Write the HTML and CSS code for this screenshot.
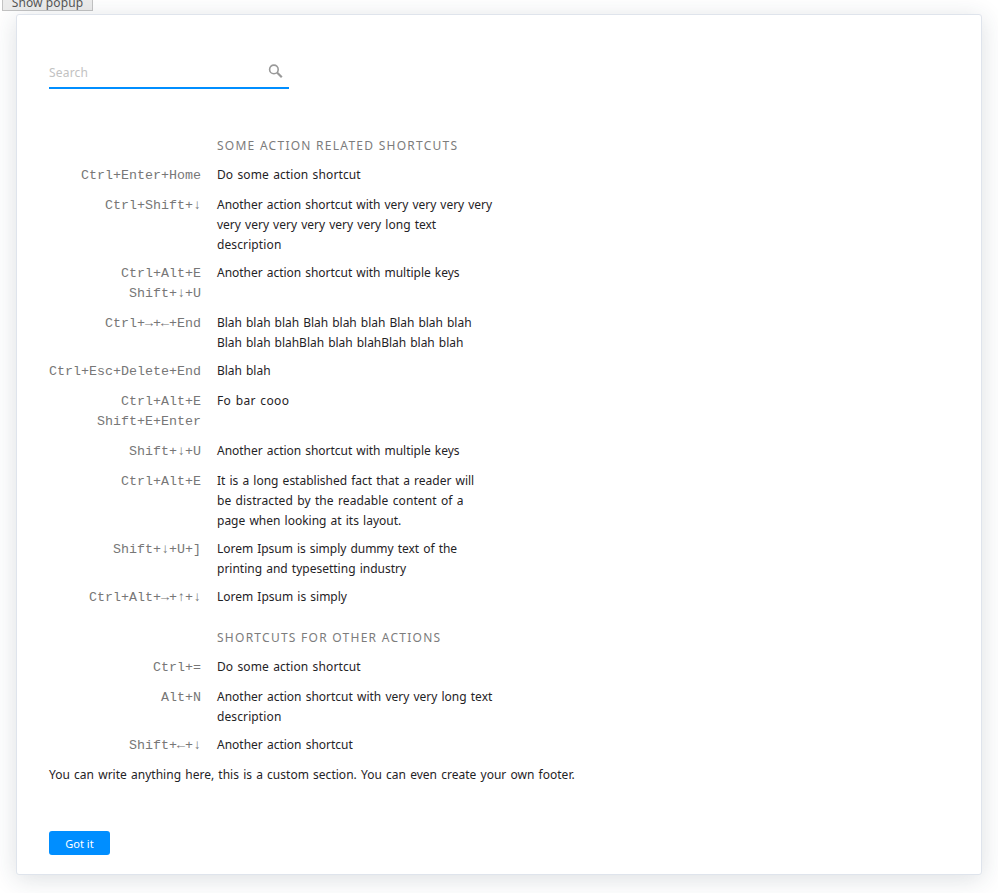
FILE: index.html
```html
<!DOCTYPE html>
<html lang="en">
<head>
<meta charset="utf-8">
<title>Keyboard shortcuts</title>
<link rel="stylesheet" href="styles.css">
</head>
<body>
<button class="show-popup" type="button">Show popup</button>
<main class="popup">
  <div class="search">
    <span class="search-label">Search</span>
    <svg class="search-icon" width="16" height="16" viewBox="0 0 16 16" fill="none" stroke="#999"><circle cx="5.9" cy="5.4" r="4.3" stroke-width="1.6"/><path d="M9 8.5 13.8 13.2" stroke-width="2.2"/></svg>
  </div>
  <section class="group">
    <h2 class="title"><span>SOME ACTION RELATED SHORTCUTS</span></h2>
    <div class="row"><div class="keys">Ctrl+Enter+Home</div><div class="desc"><span class="loose">Do some action shortcut</span></div></div>
    <div class="row"><div class="keys">Ctrl+Shift+↓</div><div class="desc"><span class="tight">Another action shortcut with very very very very</span><br><span>very very very very very very long text</span><br><span class="loose">description</span></div></div>
    <div class="row"><div class="keys">Ctrl+Alt+E<br>Shift+↓+U</div><div class="desc"><span class="tight">Another action shortcut with multiple keys</span></div></div>
    <div class="row"><div class="keys">Ctrl+→+←+End</div><div class="desc"><span class="tight">Blah blah blah Blah blah blah Blah blah blah</span><br><span class="tight">Blah blah blahBlah blah blahBlah blah blah</span></div></div>
    <div class="row"><div class="keys">Ctrl+Esc+Delete+End</div><div class="desc"><span class="tight">Blah blah</span></div></div>
    <div class="row"><div class="keys">Ctrl+Alt+E<br>Shift+E+Enter</div><div class="desc"><span class="wide">Fo bar cooo</span></div></div>
    <div class="row"><div class="keys">Shift+↓+U</div><div class="desc"><span class="tight">Another action shortcut with multiple keys</span></div></div>
    <div class="row"><div class="keys">Ctrl+Alt+E</div><div class="desc"><span>It is a long established fact that a reader will</span><br><span class="loose">be distracted by the readable content of a</span><br><span>page when looking at its layout.</span></div></div>
    <div class="row"><div class="keys">Shift+↓+U+]</div><div class="desc"><span class="tight">Lorem Ipsum is simply dummy text of the</span><br><span>printing and typesetting industry</span></div></div>
    <div class="row"><div class="keys">Ctrl+Alt+→+↑+↓</div><div class="desc"><span>Lorem Ipsum is simply</span></div></div>
  </section>
  <section class="group">
    <h2 class="title"><span>SHORTCUTS FOR OTHER ACTIONS</span></h2>
    <div class="row"><div class="keys">Ctrl+=</div><div class="desc"><span class="loose">Do some action shortcut</span></div></div>
    <div class="row"><div class="keys">Alt+N</div><div class="desc"><span>Another action shortcut with very very long text</span><br><span class="loose">description</span></div></div>
    <div class="row"><div class="keys">Shift+←+↓</div><div class="desc"><span>Another action shortcut</span></div></div>
  </section>
  <p class="note"><span>You can write anything here, this is a custom section. You can even create your own footer.</span></p>
  <button class="confirm" type="button">Got it</button>
</main>
</body>
</html>
```
FILE: styles.css
```css
* { box-sizing: border-box; }
html, body { height: 893px; overflow: hidden; }
body {
  margin: 0;
  background: #fff;
  color: #1f2326;
  font: 12px/20px "Noto Sans", "Open Sans", sans-serif;
}
button { font-family: inherit; }
.show-popup {
  display: block;
  width: 91px;
  height: 22px;
  margin: -11px 0 0 2px;
  padding: 4px 0 0;
  border: 1px solid #c3c3c3;
  background: #ececec;
  color: #555;
  font-size: 12px;
  line-height: 18px;
  letter-spacing: 0.1px;
}
.popup {
  width: 966px;
  height: 861px;
  margin: 3px 0 0 16px;
  padding: 43px 32px 0;
  border: 1px solid #dfe4ec;
  border-radius: 3px;
  background: #fff;
  box-shadow: 0 4px 24px rgba(40, 55, 75, 0.16);
}
.search {
  display: flex;
  align-items: center;
  justify-content: space-between;
  width: 240px;
  height: 31px;
  padding: 0 5px 0 0;
  border-bottom: 2px solid #008eff;
  color: #c2c2c2;
}
.search-label { letter-spacing: 0.2px; }
.search-icon { margin-top: -1px; }
.group { padding-top: 11px; }
.search + .group { padding-top: 47px; }
.title {
  margin: 0 0 9px 168px;
  color: #7c7c7c;
  font-size: 12px;
  font-weight: 400;
  line-height: 20px;
  letter-spacing: 1.26px;
}
.row {
  display: grid;
  grid-template-columns: 152px 290px;
  column-gap: 16px;
}
.keys {
  padding: 1px 0 9px;
  color: #777;
  font: 13.333px/20px "Liberation Mono", monospace;
  text-align: right;
}
.desc { padding-bottom: 8px; white-space: nowrap; word-spacing: 1px; }
.loose { letter-spacing: 0.11px; }
.tight { letter-spacing: -0.03px; }
.wide { letter-spacing: 0.36px; }
.note { margin: 0; word-spacing: 1px; letter-spacing: 0.02px; }
.confirm {
  display: block;
  width: 61px;
  height: 24px;
  margin-top: 46px;
  padding: 1px 0 0;
  border: 0;
  border-radius: 3px;
  background: #008eff;
  color: #fff;
  font-size: 11px;
  line-height: 24px;
}
```
